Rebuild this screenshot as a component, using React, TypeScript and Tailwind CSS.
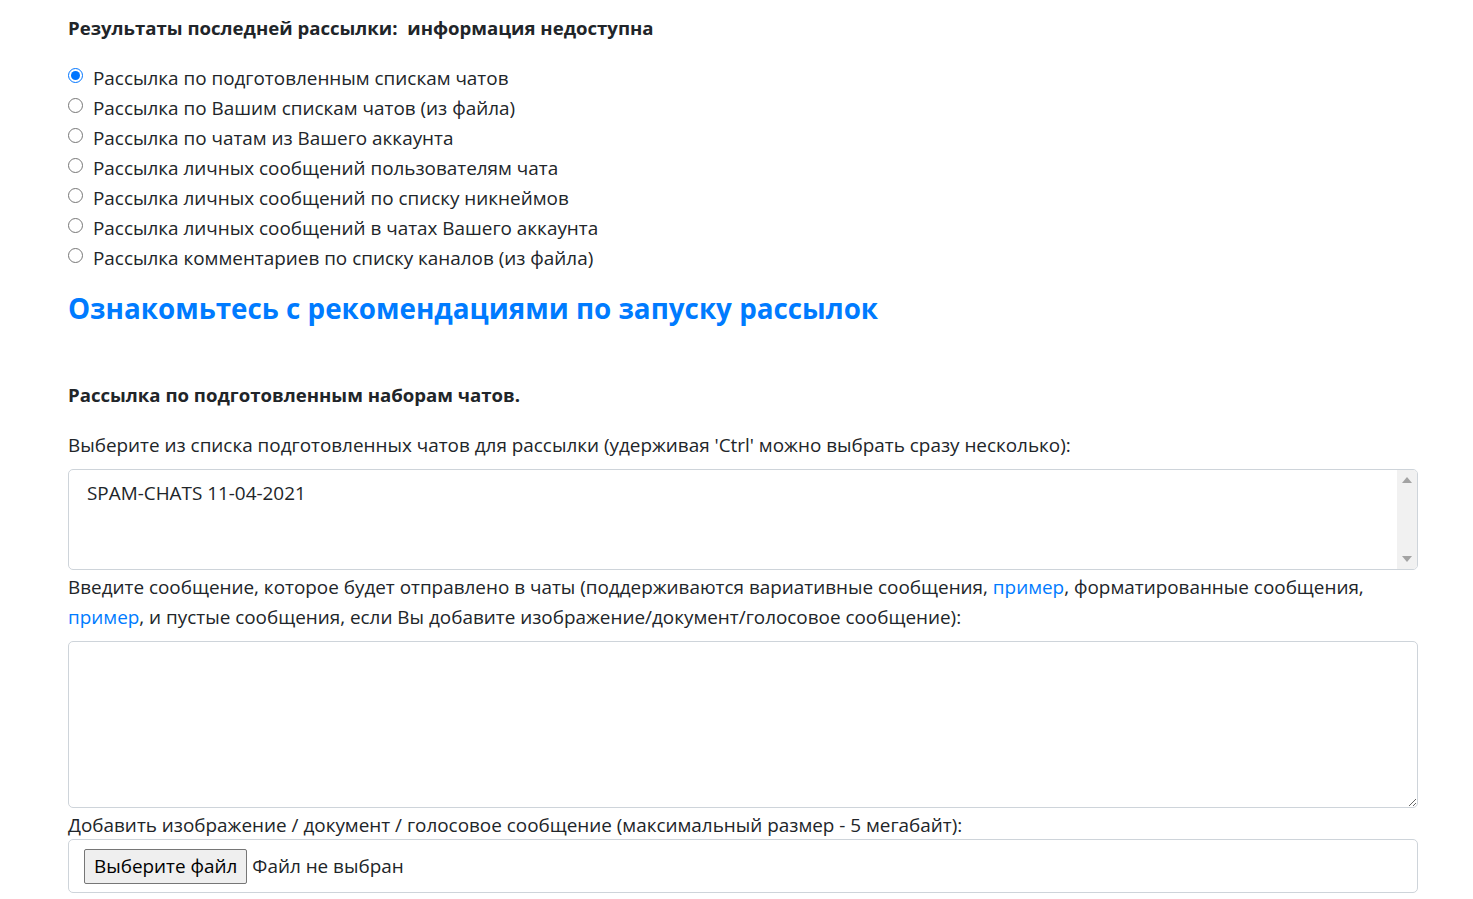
import { useState } from 'react';

const modes = [
  'Рассылка по подготовленным спискам чатов',
  'Рассылка по Вашим спискам чатов (из файла)',
  'Рассылка по чатам из Вашего аккаунта',
  'Рассылка личных сообщений пользователям чата',
  'Рассылка личных сообщений по списку никнеймов',
  'Рассылка личных сообщений в чатах Вашего аккаунта',
  'Рассылка комментариев по списку каналов (из файла)',
];

export default function App() {
  const [mode, setMode] = useState(0);
  const [message, setMessage] = useState('');

  return (
    <div className="min-h-screen bg-white text-[#212529] font-['Open_Sans',sans-serif] text-[18.9px] leading-[30px]">
      <div className="pl-[68px] pr-[55px] pt-[13px]">
        <div className="font-bold text-[18.6px]">Результаты последней рассылки:{'\u00a0 '}информация недоступна</div>

        <div className="mt-[20px]">
          {modes.map((m, i) => (
            <label key={i} className="flex items-center h-[30px] cursor-pointer">
              <input type="radio" name="mode" checked={mode === i} onChange={() => setMode(i)} className="w-[15px] h-[15px] m-0 mb-[5px] accent-[#0075ff]" />
              <span className="ml-[10px]">{m}</span>
            </label>
          ))}
        </div>

        <h4 className="mt-[17px] text-[27.8px] leading-[36px] font-bold text-[#007bff]">Ознакомьтесь с рекомендациями по запуску рассылок</h4>

        <div className="mt-[54px] font-bold text-[18.6px]">Рассылка по подготовленным наборам чатов.</div>

        <div className="mt-[20px]">Выберите из списка подготовленных чатов для рассылки (удерживая 'Ctrl' можно выбрать сразу несколько):</div>

        <div className="mt-[9px] flex h-[101px] border border-[#ced4da] rounded-[5px] overflow-hidden">
          <div className="flex-1 pl-[18px] pt-[8px]">SPAM-CHATS 11-04-2021</div>
          <div className="w-[20px] bg-[#f1f1f1] flex flex-col items-center justify-between py-[7px]">
            <svg width="10" height="6" viewBox="0 0 10 6"><path d="M0 6 L5 0 L10 6 Z" fill="#a3a3a3" /></svg>
            <svg width="10" height="6" viewBox="0 0 10 6"><path d="M0 0 L5 6 L10 0 Z" fill="#a3a3a3" /></svg>
          </div>
        </div>

        <div className="mt-[2px]">
          Введите сообщение, которое будет отправлено в чаты (поддерживаются вариативные сообщения, <a href="#" className="text-[#007bff]">пример</a>, форматированные сообщения,<br />
          <a href="#" className="text-[#007bff]">пример</a>, и пустые сообщения, если Вы добавите изображение/документ/голосовое сообщение):
        </div>

        <textarea value={message} onChange={(e) => setMessage(e.target.value)} className="mt-[9px] block w-full h-[167px] border border-[#ced4da] rounded-[5px] px-[18px] py-[8px] outline-none" />

        <div className="mt-[2px] mb-[-1px]">Добавить изображение / документ / голосовое сообщение (максимальный размер - 5 мегабайт):</div>

        <div className="h-[54px] border border-[#ced4da] rounded-[5px] flex items-center pl-[15px]">
          <button className="h-[35px] px-[9px] border border-[#767676] rounded-[2px] bg-[#efefef] text-black">Выберите файл</button>
          <span className="ml-[5px]">Файл не выбран</span>
        </div>
      </div>
    </div>
  );
}
